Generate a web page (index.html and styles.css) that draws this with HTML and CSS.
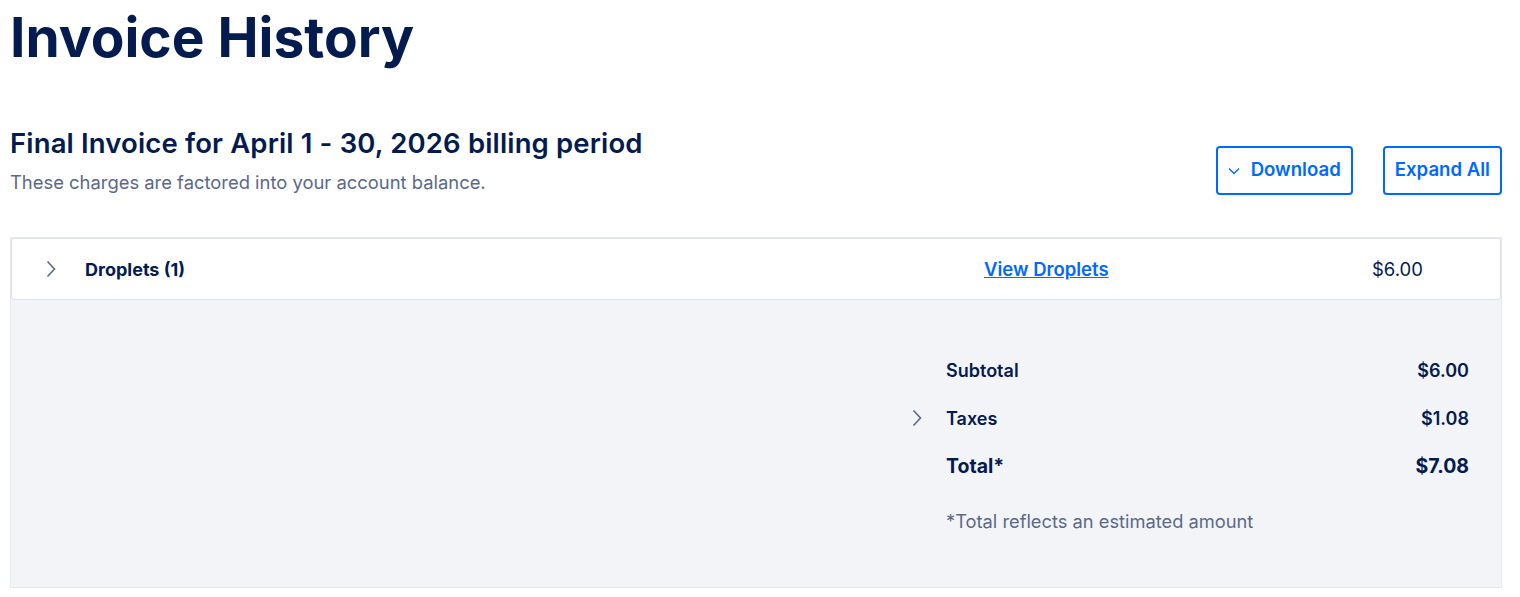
FILE: index.html
```html
<!DOCTYPE html>
<html lang="en">
<head>
    <meta charset="UTF-8">
    <title>Invoice History</title>
    <link rel="stylesheet" href="styles.css">
</head>
<body>
    <div class="page">
        <h1 class="page-title">Invoice History</h1>

        <div class="invoice-head">
            <div>
                <h2 class="invoice-title">Final Invoice for April 1 - 30, 2026 billing period</h2>
                <p class="invoice-sub">These charges are factored into your account balance.</p>
            </div>
            <div class="actions">
                <button class="btn">
                    <svg class="btn-caret" width="12" height="8" viewBox="0 0 12 8"><path d="M1 1.5 6 6.5l5-5" fill="none" stroke="currentColor" stroke-width="1.3"/></svg>
                    Download
                </button>
                <button class="btn">Expand All</button>
            </div>
        </div>

        <div class="invoice-panel">
            <div class="line-item">
                <svg class="chevron" width="10" height="18" viewBox="0 0 10 18"><path d="M1.5 1.5 8.5 9l-7 7.5" fill="none" stroke="currentColor" stroke-width="1.6"/></svg>
                <span class="item-name">Droplets (1)</span>
                <a class="item-link" href="#">View Droplets</a>
                <span class="item-cost">$6.00</span>
            </div>

            <div class="summary">
                <div class="sum-row">
                    <span class="sum-label">Subtotal</span>
                    <span class="sum-value">$6.00</span>
                </div>
                <div class="sum-row">
                    <svg class="chevron sum-chevron" width="10" height="18" viewBox="0 0 10 18"><path d="M1.5 1.5 8.5 9l-7 7.5" fill="none" stroke="currentColor" stroke-width="1.6"/></svg>
                    <span class="sum-label">Taxes</span>
                    <span class="sum-value">$1.08</span>
                </div>
                <div class="sum-row total">
                    <span class="sum-label">Total*</span>
                    <span class="sum-value">$7.08</span>
                </div>
                <p class="sum-note">*Total reflects an estimated amount</p>
            </div>
        </div>
    </div>
</body>
</html>
```

FILE: styles.css
```css
body {
    font-family: Inter, "Noto Sans", sans-serif;
    background: #fff;
    color: #031b4e;
    margin: 0;
    padding: 0;
}
.page {
    width: 1492px;
    margin-left: 10px;
}
.page-title {
    font-size: 55px;
    font-weight: 700;
    letter-spacing: 0;
    line-height: 66px;
    margin: 4px 0 0;
}
.invoice-head {
    display: flex;
    justify-content: space-between;
    align-items: flex-start;
    margin-top: 56px;
}
.invoice-title {
    font-size: 27.5px;
    font-weight: 600;
    letter-spacing: 0.15px;
    line-height: 34px;
    margin: 0;
}
.invoice-sub {
    font-size: 18.4px;
    color: #5b6987;
    margin: 11px 0 0;
}
.actions {
    display: flex;
    gap: 30px;
    margin-top: 20px;
}
.btn {
    display: flex;
    align-items: center;
    gap: 11px;
    height: 49px;
    padding: 0 10px 3px;
    background: #fff;
    color: #0069ff;
    border: 2px solid #0069ff;
    border-radius: 4px;
    font-family: inherit;
    font-size: 18.6px;
    font-weight: 600;
    cursor: pointer;
}
.btn-caret {
    margin-top: 3px;
}
.invoice-panel {
    margin-top: 42px;
    background: #f3f4f8;
    border: 1px solid #e6e8ec;
    min-height: 349px;
}
.line-item {
    display: flex;
    align-items: center;
    height: 60px;
    background: #fff;
    border: 1px solid #dfe2e8;
    border-radius: 3px;
    padding: 0 0 0 34px;
}
.chevron {
    color: #5b6987;
}
.item-name {
    font-size: 18px;
    font-weight: 700;
    margin-left: 29px;
    width: 899px;
}
.item-link {
    font-size: 18.5px;
    font-weight: 600;
    color: #0069ff;
    width: 388px;
}
.item-cost {
    font-size: 18.5px;
}
.summary {
    width: 523px;
    margin: 46px 0 0 935px;
}
.sum-row {
    position: relative;
    display: flex;
    justify-content: space-between;
    align-items: center;
    height: 48px;
    font-size: 18px;
    font-weight: 600;
}
.sum-chevron {
    position: absolute;
    left: -34px;
}
.sum-row.total {
    font-size: 19.5px;
    font-weight: 700;
}
.sum-note {
    font-size: 18.3px;
    color: #5b6987;
    margin: 20px 0 0;
}
```
